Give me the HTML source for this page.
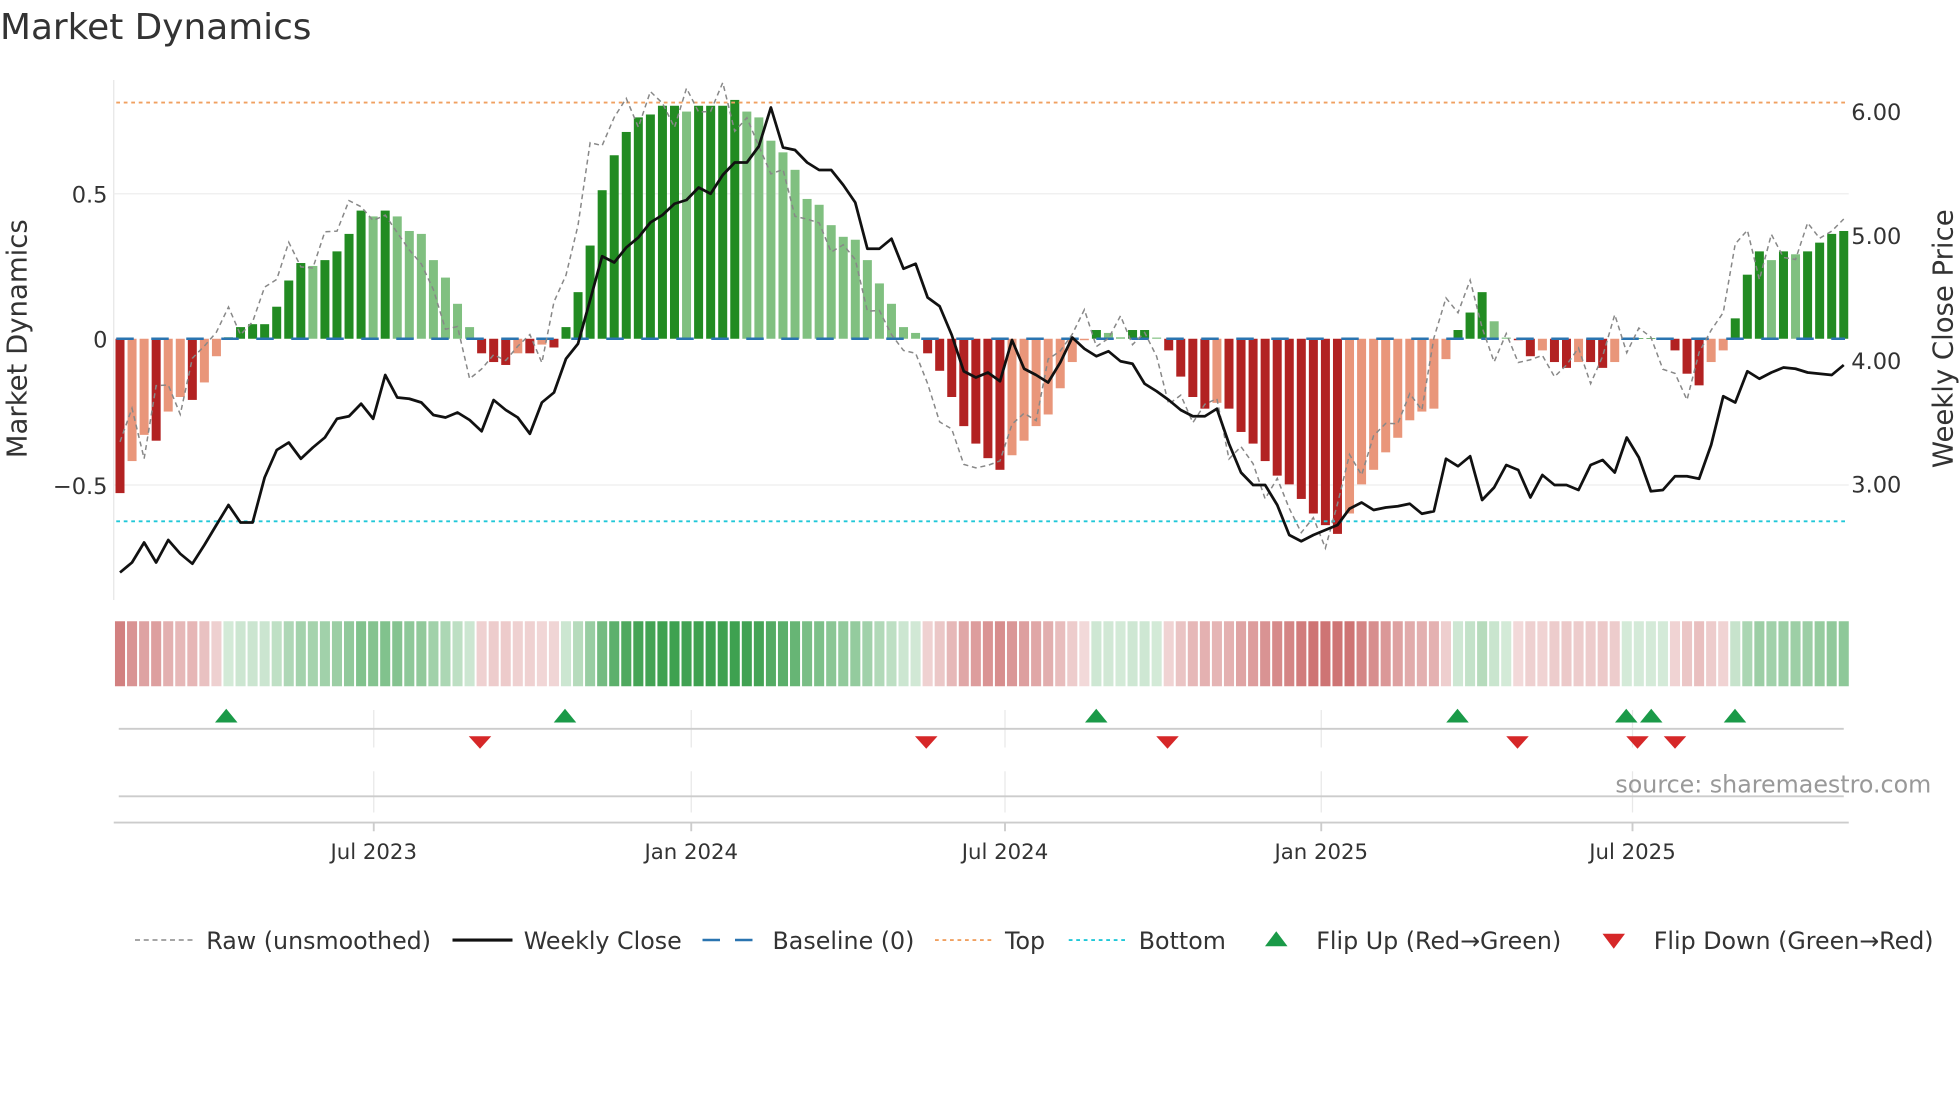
<!DOCTYPE html>
<html><head><meta charset="utf-8"><style>
html,body{margin:0;padding:0;background:#fff;width:1960px;height:1102px;overflow:hidden}
svg{display:block}
text{font-family:"DejaVu Sans","Liberation Sans",sans-serif}
</style></head><body>
<svg id="s" width="1960" height="1102" viewBox="0 0 1568 881.6" xmlns="http://www.w3.org/2000/svg">
<rect width="1568" height="882" fill="#fff"/>
<text x="0" y="31" font-size="28.7" fill="#333">Market Dynamics</text>
<line x1="91" y1="64" x2="91" y2="480" stroke="#e6e6e6" stroke-width="1"/>
<line x1="91" y1="155" x2="1479" y2="155" stroke="#eeeeee" stroke-width="1"/>
<line x1="91" y1="388" x2="1479" y2="388" stroke="#eeeeee" stroke-width="1"/>
<text x="86" y="162" font-size="18" fill="#333" text-anchor="end">0.5</text>
<text x="86" y="278" font-size="18" fill="#333" text-anchor="end">0</text>
<text x="86" y="395" font-size="18" fill="#333" text-anchor="end">−0.5</text>
<text transform="translate(21,271) rotate(-90)" font-size="22" fill="#333" text-anchor="middle">Market Dynamics</text>
<text x="1481" y="96" font-size="18" fill="#333">6.00</text>
<text x="1481" y="195" font-size="18" fill="#333">5.00</text>
<text x="1481" y="295" font-size="18" fill="#333">4.00</text>
<text x="1481" y="394" font-size="18" fill="#333">3.00</text>
<text transform="translate(1562,271) rotate(-90)" font-size="22" fill="#333" text-anchor="middle">Weekly Close Price</text>
<g id="bars"></g>
<line x1="93" y1="82" x2="1476" y2="82" stroke="#f0a060" stroke-width="1.5" stroke-dasharray="3,3"/>
<line x1="93" y1="417" x2="1476" y2="417" stroke="#20c8d8" stroke-width="1.5" stroke-dasharray="3,3"/>
<line x1="93" y1="271" x2="1476" y2="271" stroke="#2a74b0" stroke-width="2" stroke-dasharray="14,14"/>
<polyline id="raw" fill="none" stroke="#888" stroke-width="1.2" stroke-dasharray="4,3"/>
<polyline id="price" fill="none" stroke="#111" stroke-width="2.2" stroke-linejoin="round"/>
<g id="heat"></g>
<g stroke="#e8e8e8" stroke-width="1">
<line x1="299" y1="568" x2="299" y2="598"/><line x1="553" y1="568" x2="553" y2="598"/><line x1="804" y1="568" x2="804" y2="598"/><line x1="1057" y1="568" x2="1057" y2="598"/><line x1="1306" y1="568" x2="1306" y2="598"/>
<line x1="299" y1="617" x2="299" y2="650"/><line x1="553" y1="617" x2="553" y2="650"/><line x1="804" y1="617" x2="804" y2="650"/><line x1="1057" y1="617" x2="1057" y2="650"/><line x1="1306" y1="617" x2="1306" y2="650"/>
</g>
<line x1="95" y1="583" x2="1475" y2="583" stroke="#ccc" stroke-width="1.5"/>
<line x1="95" y1="637" x2="1475" y2="637" stroke="#ccc" stroke-width="1.5"/>
<line x1="91" y1="658" x2="1479" y2="658" stroke="#ccc" stroke-width="1.5"/>
<g stroke="#ccc" stroke-width="1.5"><line x1="299" y1="658" x2="299" y2="665"/><line x1="553" y1="658" x2="553" y2="665"/><line x1="804" y1="658" x2="804" y2="665"/><line x1="1057" y1="658" x2="1057" y2="665"/><line x1="1306" y1="658" x2="1306" y2="665"/></g>
<g id="flips"></g>
<text x="1545" y="634" font-size="19" fill="#999" text-anchor="end">source: sharemaestro.com</text>
<g font-size="17" fill="#333" text-anchor="middle">
<text x="299" y="687">Jul 2023</text><text x="553" y="687">Jan 2024</text><text x="804" y="687">Jul 2024</text><text x="1057" y="687">Jan 2025</text><text x="1306" y="687">Jul 2025</text>
</g>
<g font-size="19" fill="#333">
<line x1="108" y1="752" x2="154" y2="752" stroke="#888" stroke-width="1.2" stroke-dasharray="4,3"/>
<text x="165" y="759">Raw (unsmoothed)</text>
<line x1="362" y1="752" x2="410" y2="752" stroke="#111" stroke-width="2.5"/>
<text x="419" y="759">Weekly Close</text>
<line x1="562" y1="752" x2="608" y2="752" stroke="#2a74b0" stroke-width="2" stroke-dasharray="14,12"/>
<text x="618" y="759">Baseline (0)</text>
<line x1="748" y1="752" x2="794" y2="752" stroke="#f0a060" stroke-width="1.5" stroke-dasharray="3,3"/>
<text x="804" y="759">Top</text>
<line x1="855" y1="752" x2="901" y2="752" stroke="#20c8d8" stroke-width="1.5" stroke-dasharray="3,3"/>
<text x="911" y="759">Bottom</text>
<polygon points="1012,757 1030,757 1021,745" fill="#1a9a48"/>
<text x="1053" y="759">Flip Up (Red→Green)</text>
<polygon points="1282,747 1300,747 1291,759" fill="#d62728"/>
<text x="1323" y="759">Flip Down (Green→Red)</text>
</g>
</svg>
<script>
var v=[-0.53,-0.42,-0.33,-0.35,-0.25,-0.2,-0.21,-0.15,-0.06,0.005,0.04,0.05,0.05,0.11,0.2,0.26,0.25,0.27,0.3,0.36,0.44,0.42,0.44,0.42,0.37,0.36,0.27,0.21,0.12,0.04,-0.05,-0.08,-0.09,-0.05,-0.05,-0.02,-0.03,0.04,0.16,0.32,0.51,0.63,0.71,0.76,0.77,0.8,0.8,0.78,0.8,0.8,0.8,0.82,0.78,0.76,0.68,0.64,0.58,0.48,0.46,0.39,0.35,0.34,0.27,0.19,0.12,0.04,0.02,-0.05,-0.11,-0.2,-0.3,-0.36,-0.41,-0.45,-0.4,-0.35,-0.3,-0.26,-0.17,-0.08,-0.005,0.03,0.02,0.005,0.03,0.03,0.004,-0.04,-0.13,-0.2,-0.24,-0.22,-0.24,-0.32,-0.36,-0.42,-0.47,-0.5,-0.55,-0.6,-0.64,-0.67,-0.6,-0.5,-0.45,-0.39,-0.34,-0.28,-0.25,-0.24,-0.07,0.03,0.09,0.16,0.06,0.004,-0.005,-0.06,-0.04,-0.08,-0.1,-0.08,-0.08,-0.1,-0.08,0.002,0.002,0.002,0.002,-0.04,-0.12,-0.16,-0.08,-0.04,0.07,0.22,0.3,0.27,0.3,0.29,0.3,0.33,0.36,0.37];
var py=[458,450,434,450,432,443,451,436,420,404,418,418,382,360,354,367,358,350,335,333,323,335,300,318,319,322,332,334,330,336,345,320,328,334,347,322,314,287,275,240,205,210,198,190,178,172,163,160,150,155,140,130,130,117,86,118,120,130,136,136,148,162,199,199,191,215,211,238,245,268,297,302,298,305,272,295,300,306,290,270,279,285,281,289,291,307,313,320,328,333,333,327,355,378,388,388,404,428,433,428,424,420,407,402,408,406,405,403,411,409,367,373,365,400,390,372,376,398,380,388,388,392,372,368,378,350,366,393,392,381,381,383,356,317,322,297,303,298,294,295,298,299,300,292];
var N=v.length,x0=96,dx=(1475-96)/(N-1),Y0=271,K=233;
var ns="http://www.w3.org/2000/svg";
function el(t,a,p){var e=document.createElementNS(ns,t);for(var k in a)e.setAttribute(k,a[k]);p.appendChild(e);return e;}
var B=document.getElementById('bars'),H=document.getElementById('heat');
var rp=[];
for(var i=0;i<N;i++){
 var x=x0+i*dx,val=v[i],prev=i?v[i-1]:val;
 var c;
 if(val>=0)c=(val>=prev)?'#228b22':'#80c080';else c=(val<=prev)?'#b22222':'#e9967a';
 var y=val>=0?Y0-val*K:Y0,h=Math.abs(val)*K;
 el('rect',{x:x-3.6,y:y,width:7.2,height:Math.max(h,0.5),fill:c},B);
 var t=Math.min(Math.abs(val)/0.8,1),hc;
 if(val>=0){hc='rgba(40,150,60,'+(0.2+0.7*t)+')';}
 else{hc='rgba(190,70,70,'+(0.2+0.55*Math.min(Math.abs(val)/0.6,1))+')';}
 el('rect',{x:x-dx/2+0.8,y:497,width:dx-1.6,height:52,fill:hc},H);
 var nx=(i<N-1?v[i+1]:val);
 var r=val+(nx-val)*1.6+Math.sin(i*2.3)*0.05;
 rp.push(x.toFixed(1)+','+(Y0-r*K).toFixed(1));
}
document.getElementById('raw').setAttribute('points',rp.join(' '));
var pp=[],M=py.length,pdx=(1475-96)/(M-1);
for(var j=0;j<M;j++)pp.push((96+j*pdx).toFixed(1)+','+py[j]);
document.getElementById('price').setAttribute('points',pp.join(' '));
var F=document.getElementById('flips');
[181,452,877,1166,1301,1321,1388].forEach(function(x){el('polygon',{points:(x-9)+',578 '+(x+9)+',578 '+x+',567',fill:'#1a9a48'},F);});
[384,741,934,1214,1310,1340].forEach(function(x){el('polygon',{points:(x-9)+',589 '+(x+9)+',589 '+x+',599',fill:'#d62728'},F);});
</script>
</body></html>
